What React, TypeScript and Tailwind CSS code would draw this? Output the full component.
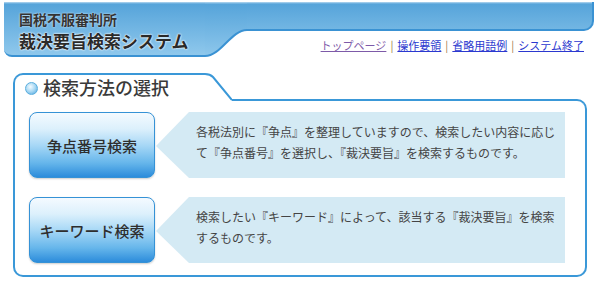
import React from "react";

const BLUE = "#3a98d8";

interface MethodRowProps {
  label: string;
  lines: string[];
}

const MethodRow: React.FC<MethodRowProps> = ({ label, lines }) => {
  return (
    <div className="flex h-[66px] items-stretch">
      <button className="flex h-[66px] w-[126px] flex-none items-center justify-center rounded-[8px] border border-[#3592d6] bg-[linear-gradient(to_bottom,#f4faff_0%,#dcf0fc_25%,#a8d8f6_50%,#66b6eb_78%,#2c8cdb_100%)] pt-[3px] text-[15px] font-medium text-[#2e2e2e] shadow-[0_1px_2px_rgba(0,0,0,0.2)]">
        {label}
      </button>
      <div className="ml-[1px] flex flex-1">
        <svg width="33" height="66" className="flex-none">
          <polygon points="0,34 33,0 33,66" fill="#d4eaf4" />
        </svg>
        <div className="flex-1 bg-[#d4eaf4] pl-[7px] pt-[9px] text-[12px] leading-[21px] whitespace-nowrap text-[#444]">
          {lines.map((l, i) => (
            <div key={i}>{l}</div>
          ))}
        </div>
      </div>
    </div>
  );
};

const App: React.FC = () => {
  return (
    <div className="h-[282px] w-[600px] overflow-hidden bg-white pt-[2px] font-['Noto_Sans_CJK_JP','Noto_Sans',sans-serif]">
      {/* header band */}
      <div className="ml-[4px] flex w-[590px] items-start">
        <div className="h-[55px] w-[201px] flex-none rounded-bl-[8px] border-b-2 border-[#3a92d3] bg-[linear-gradient(to_bottom,#b8d9f0_0px,#56a4da_2px,#8fc8ec_53px)] pl-[15px] pt-[10px]">
          <div className="text-[14px] leading-[14px] font-bold text-[#333] [text-shadow:0_0_2px_#e8f4fc]">
            国税不服審判所
          </div>
          <div className="mt-[5px] text-[17px] leading-[20px] font-bold text-[#2a2a2a] [text-shadow:0_0_2px_#fff,0_0_2px_#fff]">
            裁決要旨検索システム
          </div>
        </div>
        <svg width="42" height="55" className="flex-none">
          <defs>
            <linearGradient id="hdr" x1="0" y1="0" x2="0" y2="55" gradientUnits="userSpaceOnUse">
              <stop offset="0" stopColor="#b8d9f0" />
              <stop offset="0.04" stopColor="#56a4da" />
              <stop offset="1" stopColor="#8fc8ec" />
            </linearGradient>
          </defs>
          <path d="M0,0 H42 V28 C26,28 16,54 0,54 Z" fill="url(#hdr)" />
          <path d="M0,54 C16,54 26,28 42,28" fill="none" stroke="#3a92d3" strokeWidth="2" />
        </svg>
        <div className="flex flex-1 flex-col">
          <div className="h-[29px] rounded-br-[10px] border-r-2 border-b-2 border-[#3a92d3] bg-[linear-gradient(to_bottom,#b8d9f0_0px,#56a4da_2px,#8fc8ec_53px)] bg-[length:100%_55px] bg-no-repeat" />
          <nav className="mt-[7px] flex justify-end pr-[10px] text-[11px] leading-[14px]">
            <a href="#" className="text-[#7d5aa8] underline">トップページ</a>
            <span className="mx-[4px] text-[#9c7a4a]">|</span>
            <a href="#" className="text-[#2b38cf] underline">操作要領</a>
            <span className="mx-[4px] text-[#9c7a4a]">|</span>
            <a href="#" className="text-[#2b38cf] underline">省略用語例</a>
            <span className="mx-[4px] text-[#9c7a4a]">|</span>
            <a href="#" className="text-[#2b38cf] underline">システム終了</a>
          </nav>
        </div>
      </div>

      {/* search method panel */}
      <div className="ml-[13px] mt-[16px] w-[574px]">
        <div className="flex h-[36px] items-end">
          <div className="flex h-[36px] w-[192px] flex-none items-start rounded-tl-[10px] border-t-2 border-l-2 border-[#3a98d8] pl-[10px] pt-[3px]">
            <span className="mt-[4px] h-[13px] w-[13px] flex-none rounded-full border border-[#5aaede] bg-[radial-gradient(circle_at_40%_35%,#f4fbff_0%,#a6d7f3_50%,#4aa2dc_100%)]" />
            <span className="ml-[5px] text-[18px] leading-[18px] font-medium text-[#3a3a3a]">
              検索方法の選択
            </span>
          </div>
          <svg width="27" height="36" className="flex-none">
            <path d="M0,1 Q5,1 8,4 L27,27" fill="none" stroke={BLUE} strokeWidth="2" />
          </svg>
          <div className="h-[10px] flex-1 rounded-tr-[10px] border-t-2 border-r-2 border-[#3a98d8]" />
        </div>
        <div className="flex flex-col gap-[19px] rounded-b-[10px] border-x-2 border-b-2 border-[#3a98d8] pt-[3px] pb-[12px] pl-[14px] pr-[20px]">
          <MethodRow
            label="争点番号検索"
            lines={[
              "各税法別に『争点』を整理していますので、検索したい内容に応じ",
              "て『争点番号』を選択し、『裁決要旨』を検索するものです。",
            ]}
          />
          <MethodRow
            label="キーワード検索"
            lines={[
              "検索したい『キーワード』によって、該当する『裁決要旨』を検索",
              "するものです。",
            ]}
          />
        </div>
      </div>
    </div>
  );
};

export default App;
